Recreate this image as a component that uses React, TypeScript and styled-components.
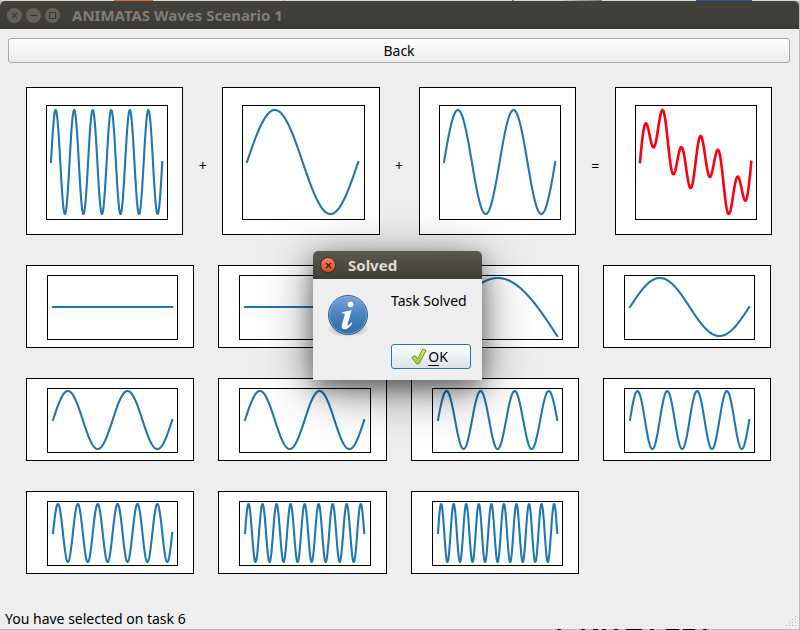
import React from 'react';
import styled, { createGlobalStyle } from 'styled-components';

const GlobalStyle = createGlobalStyle`
  * { box-sizing: border-box; }
  body {
    margin: 0;
    background: #bababa;
    color: #000;
    font: 14px/20px "Noto Sans", "Open Sans", sans-serif;
  }
  button { font: inherit; color: inherit; }
`;

const Desktop = styled.div`
  min-height: 100vh;
  display: grid;
  grid-template-rows: 1px 1fr 1px;
`;

const TopEdge = styled.div`
  background:
    linear-gradient(#e0693a, #e0693a) 114px 0 / 39px 1px no-repeat,
    linear-gradient(#d98b68, #d98b68) 284px 0 / 1px 1px no-repeat,
    linear-gradient(#5b7bb0, #5b7bb0) 512px 0 / 2px 1px no-repeat,
    linear-gradient(90deg, #d0d0d0, #777) 562px 0 / 40px 1px no-repeat,
    linear-gradient(#2f5593, #2f5593) 696px 0 / 56px 1px no-repeat,
    #d9dbd7;
`;

const BottomEdge = styled.div`
  background:
    linear-gradient(#000, #000) 557px 0 / 4px 1px no-repeat,
    linear-gradient(#000, #000) 581px 0 / 4px 1px no-repeat,
    linear-gradient(#000, #000) 593px 0 / 5px 1px no-repeat,
    linear-gradient(#000, #000) 602px 0 / 4px 1px no-repeat,
    linear-gradient(#000, #000) 614px 0 / 4px 1px no-repeat,
    linear-gradient(#000, #000) 626px 0 / 16px 1px no-repeat,
    linear-gradient(#000, #000) 650px 0 / 4px 1px no-repeat,
    linear-gradient(#000, #000) 666px 0 / 13px 1px no-repeat,
    linear-gradient(#000, #000) 683px 0 / 12px 1px no-repeat,
    linear-gradient(#000, #000) 703px 0 / 4px 1px no-repeat,
    #bababa;
`;

const Window = styled.div`
  position: relative;
  display: flex;
  flex-direction: column;
  margin-right: 1px;
  border-radius: 5px 5px 0 0;
  background: #eee;
`;

const TitleBar = styled.header<{ $active?: boolean }>`
  display: flex;
  align-items: center;
  height: 28px;
  padding: 0 7px;
  border-radius: 5px 5px 0 0;
  background: ${(p) =>
    p.$active ? 'linear-gradient(#5b594e, #3e3d38)' : 'linear-gradient(#42413c, #3c3b37)'};
  color: ${(p) => (p.$active ? '#dfdbd2' : '#807d78')};
`;

const WindowButtons = styled.div`
  display: flex;
  gap: 4px;
`;

const RoundButton = styled.button<{ $active?: boolean }>`
  display: grid;
  place-items: center;
  width: ${(p) => (p.$active ? 16 : 15)}px;
  height: ${(p) => (p.$active ? 16 : 15)}px;
  padding: 0;
  border: ${(p) => (p.$active ? '1px solid #33322d' : '0')};
  border-radius: 50%;
  background: ${(p) => (p.$active ? 'linear-gradient(#f58461, #df4b1c)' : '#63615a')};
  color: ${(p) => (p.$active ? '#3a1a0e' : '#3a3934')};
`;

const WindowTitle = styled.h1`
  margin: 0 0 0 12px;
  font-size: 15px;
  line-height: 20px;
  font-weight: 700;
`;

const Content = styled.main`
  flex: 1;
  display: flex;
  flex-direction: column;
  padding: 9px 9px 0 8px;
`;

const BackButton = styled.button`
  height: 25px;
  padding: 0;
  border: 1px solid #a8a8a8;
  border-radius: 3px;
  background: linear-gradient(#fff, #ebebeb);
`;

const Equation = styled.section`
  display: grid;
  grid-template-columns: 1fr 39px 1fr 39px 1fr 39px 1fr;
  align-items: center;
  margin: 24px 18px 30px;
`;

const Operator = styled.span`
  text-align: center;
  padding-top: 10px;
`;

const Choices = styled.section`
  display: grid;
  grid-template-columns: repeat(4, 1fr);
  gap: 30px 24px;
  margin: 0 19px 0 18px;
`;

const Figure = styled.div`
  display: flex;
  height: 148px;
  padding: 17px 14px 14px 19px;
  border: 1px solid #000;
  background: #fff;
`;

const ChoiceButton = styled.button`
  display: flex;
  height: 83px;
  padding: 9px 15px 7px 20px;
  border: 1px solid #000;
  background: #fff;
`;

const Axes = styled.div<{ $tall?: boolean }>`
  flex: 1;
  align-self: stretch;
  display: flex;
  padding: ${(p) => (p.$tall ? '4px 5px 5px 4px' : '2px 5px 3px 5px')};
  border: 1px solid #000;
`;

const Curve = styled.svg<{ $bold?: boolean }>`
  flex: 1;
  width: 0;
  min-width: 0;
  height: 100%;
  overflow: visible;
  fill: none;
  stroke-width: ${(p) => (p.$bold ? 2.6 : 2.1)};
  stroke-linecap: square;
  stroke-linejoin: round;
`;

const StatusBar = styled.footer`
  display: flex;
  justify-content: space-between;
  align-items: flex-end;
  padding: 0 2px 0 5px;
`;

const Grip = styled.svg`
  width: 11px;
  height: 11px;
  margin-bottom: 2px;
  fill: #b4b4b4;
`;

const Overlay = styled.div`
  position: absolute;
  inset: 0;
  display: grid;
  place-items: center;
  padding: 1px 4px 0 0;
`;

const Dialog = styled.div`
  width: 169px;
  border-radius: 5px 5px 0 0;
  background: #eee;
  box-shadow: 0 8px 20px rgba(0, 0, 0, 0.36), 0 10px 50px rgba(0, 0, 0, 0.5);
`;

const DialogBody = styled.div`
  display: grid;
  grid-template-columns: 48px 80px;
  justify-content: space-between;
  align-items: start;
  height: 101px;
  padding: 12px 11px 11px;
`;

const DialogSide = styled.div`
  display: flex;
  flex-direction: column;
  justify-content: space-between;
  height: 100%;
  white-space: nowrap;
`;

const Message = styled.p`
  margin: 0;
`;

const OkButton = styled.button`
  display: flex;
  align-items: center;
  justify-content: center;
  gap: 1px;
  height: 25px;
  padding: 0 3px 0 0;
  border: 1px solid #2f75a3;
  border-radius: 3px;
  background: linear-gradient(#fff, #dce3e9);
`;

const Mnemonic = styled.span`
  text-decoration: underline;
  text-underline-offset: 3px;
`;

const TAU = Math.PI * 2;

function wavePath(frequencies: number[]): string {
  const steps = 400;
  const values = Array.from({ length: steps + 1 }, (_, i) =>
    frequencies.reduce((sum, f) => sum + Math.sin((TAU * f * i) / steps), 0),
  );
  const low = Math.min(...values);
  const range = Math.max(...values) - low;
  return values
    .map((v, i) => {
      const y = range < 0.001 ? 50 : 100 - ((v - low) / range) * 100;
      return `${i ? 'L' : 'M'}${((i / steps) * 100).toFixed(2)} ${y.toFixed(2)}`;
    })
    .join('');
}

function Plot({ waves, result, tall }: { waves: number[]; result?: boolean; tall?: boolean }) {
  return (
    <Axes as="span" $tall={tall}>
      <Curve
        $bold={result}
        viewBox="0 0 100 100"
        preserveAspectRatio="none"
        stroke={result ? '#fa0010' : '#1f77b4'}
        aria-hidden="true"
      >
        <path d={wavePath(waves)} vectorEffect="non-scaling-stroke" />
      </Curve>
    </Axes>
  );
}

function Glyph({ d }: { d: string }) {
  return (
    <svg width="9" height="9" viewBox="0 0 9 9" fill="none" stroke="currentColor" strokeWidth="1.2">
      <path d={d} />
    </svg>
  );
}

const CROSS = 'M2 2L7 7M7 2L2 7';
const LINE = 'M1 4.5H8';
const SQUARE = 'M1.5 1.5H7.5V7.5H1.5Z';

function InfoIcon() {
  return (
    <svg width="48" height="48" viewBox="0 0 48 48" aria-hidden="true">
      <defs>
        <linearGradient id="disc" x1="0" y1="0" x2="0" y2="1">
          <stop offset="0" stopColor="#7ba3dc" />
          <stop offset="0.5" stopColor="#4a82bd" />
          <stop offset="1" stopColor="#2a6fa3" />
        </linearGradient>
        <radialGradient id="ground">
          <stop offset="0" stopColor="#000" stopOpacity="0.35" />
          <stop offset="1" stopColor="#000" stopOpacity="0" />
        </radialGradient>
      </defs>
      <ellipse cx="24" cy="39" rx="22" ry="7" fill="url(#ground)" />
      <circle cx="24" cy="24" r="19.5" fill="url(#disc)" stroke="#2b659b" />
      <circle cx="24" cy="24" r="18.5" fill="none" stroke="#8fb5df" strokeOpacity="0.6" />
      <circle cx="26.5" cy="13.5" r="2.8" fill="#fff" />
      <path
        d="M18.2 21.2C20.8 20.9 24 20 27.6 19L23.6 33.2C23 35.4 24.2 35.2 27.4 31.6L28.3 32.4C25.8 36 23.2 38.2 20.4 38.2C17.8 38.2 17.2 36.2 17.9 33.8L20.6 24.6C21.2 22.6 20.6 22.4 18 22.4Z"
        fill="#fff"
      />
    </svg>
  );
}

function CheckIcon() {
  return (
    <svg width="16" height="18" viewBox="0 0 16 18" aria-hidden="true">
      <defs>
        <linearGradient id="tick" x1="0" y1="0" x2="0" y2="1">
          <stop offset="0" stopColor="#d6ee7c" />
          <stop offset="1" stopColor="#9cc63a" />
        </linearGradient>
      </defs>
      <path
        d="M0.8 9.8L4 7.6L6.6 11L11.8 1L15 2.4L8.2 15.6L6 16.2Z"
        fill="url(#tick)"
        stroke="#6e9420"
        strokeLinejoin="round"
      />
    </svg>
  );
}

const CHOICES = [0, 0, 0.5, 1, 2, 2, 3.5, 4, 6, 8.5, 9.5];

const GRIP_DOTS = [
  [9, 0],
  [6, 3], [9, 3],
  [3, 6], [6, 6], [9, 6],
  [0, 9], [3, 9], [6, 9], [9, 9],
];

export default function App() {
  return (
    <Desktop>
      <GlobalStyle />
      <TopEdge />
      <Window>
        <TitleBar>
          <WindowButtons>
            <RoundButton aria-label="Close"><Glyph d={CROSS} /></RoundButton>
            <RoundButton aria-label="Minimize"><Glyph d={LINE} /></RoundButton>
            <RoundButton aria-label="Maximize"><Glyph d={SQUARE} /></RoundButton>
          </WindowButtons>
          <WindowTitle>ANIMATAS Waves Scenario 1</WindowTitle>
        </TitleBar>
        <Content>
          <BackButton>Back</BackButton>
          <Equation>
            <Figure><Plot tall waves={[6]} /></Figure>
            <Operator>+</Operator>
            <Figure><Plot tall waves={[1]} /></Figure>
            <Operator>+</Operator>
            <Figure><Plot tall waves={[2]} /></Figure>
            <Operator>=</Operator>
            <Figure><Plot tall result waves={[1, 2, 6]} /></Figure>
          </Equation>
          <Choices>
            {CHOICES.map((frequency, i) => (
              <ChoiceButton key={i} aria-label={`Wave ${i + 1}`}>
                <Plot waves={[frequency]} />
              </ChoiceButton>
            ))}
          </Choices>
        </Content>
        <StatusBar>
          You have selected on task 6
          <Grip viewBox="0 0 11 11" aria-hidden="true">
            {GRIP_DOTS.map(([x, y]) => (
              <rect key={`${x}-${y}`} x={x} y={y} width="1" height="1" />
            ))}
          </Grip>
        </StatusBar>
        <Overlay>
          <Dialog role="dialog" aria-labelledby="dialog-title">
            <TitleBar $active>
              <RoundButton $active aria-label="Close dialog"><Glyph d={CROSS} /></RoundButton>
              <WindowTitle as="h2" id="dialog-title">Solved</WindowTitle>
            </TitleBar>
            <DialogBody>
              <InfoIcon />
              <DialogSide>
                <Message>Task Solved</Message>
                <OkButton>
                  <CheckIcon />
                  <span><Mnemonic>O</Mnemonic>K</span>
                </OkButton>
              </DialogSide>
            </DialogBody>
          </Dialog>
        </Overlay>
      </Window>
      <BottomEdge />
    </Desktop>
  );
}
